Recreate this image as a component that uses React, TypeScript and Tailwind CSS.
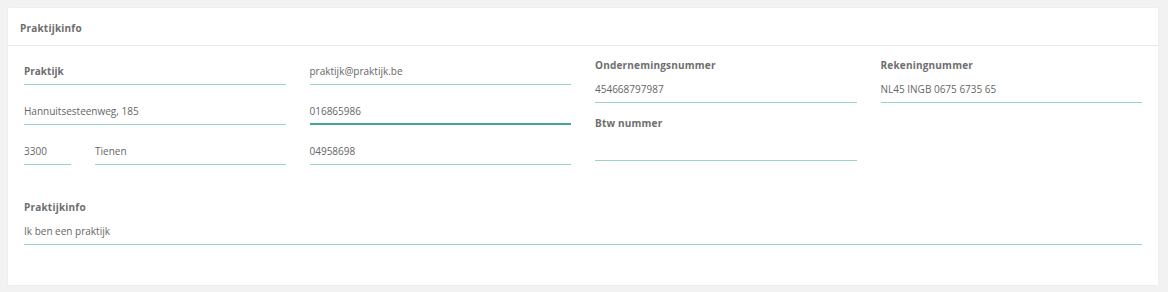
import React from "react";

const font = { fontFamily: '"Open Sans", "Liberation Sans", sans-serif' };

function Line({
  value,
  bold,
  focused,
  className = "",
}: {
  value?: string;
  bold?: boolean;
  focused?: boolean;
  className?: string;
}) {
  return (
    <div
      className={`pt-[6px] leading-[14px] text-[10px] ${
        focused ? "pb-[5px] border-b-2 border-[#3fa893]" : "pb-[6px] border-b border-[#98d5c6]"
      } ${bold ? "font-bold text-[#6e6e6e]" : "text-[#666]"} ${className}`}
    >
      <span className="block h-[14px]">{value}</span>
    </div>
  );
}

function LabeledField({ label, value }: { label: string; value?: string }) {
  return (
    <div>
      <div className="text-[10px] leading-[14px] font-bold text-[#6e6e6e] tracking-[0.2px]">{label}</div>
      <div className="mt-[10px] h-[14px] text-[10px] leading-[14px] text-[#666]">{value}</div>
      <div className="mt-[6px] border-b border-[#98d5c6]" />
    </div>
  );
}

export default function App() {
  return (
    <div className="min-h-[292px] bg-[#f2f2f2] pt-[8px] pl-[8px] pr-[10px] pb-[7px]" style={font}>
      <div className="bg-white shadow-[0_0_2px_rgba(0,0,0,0.05)]">
        {/* Header */}
        <div className="h-[38px] px-[12px] flex items-center border-b border-[#e8e8e8]">
          <h2 className="text-[10px] font-bold text-[#6e6e6e] tracking-[0.2px] mt-[3px]">Praktijkinfo</h2>
        </div>

        <div className="px-[16px] pt-[12px] pb-[40px]">
          <div className="grid grid-cols-4 gap-x-[24px]">
            {/* Col 1 */}
            <div className="flex flex-col gap-[13px]">
              <Line value="Praktijk" bold />
              <Line value="Hannuitsesteenweg, 185" />
              <div className="flex gap-[24px]">
                <Line value="3300" className="w-[47px]" />
                <Line value="Tienen" className="flex-1" />
              </div>
            </div>

            {/* Col 2 */}
            <div className="flex flex-col gap-[13px]">
              <Line value="praktijk@praktijk.be" />
              <Line value="016865986" focused />
              <Line value="04958698" />
            </div>

            {/* Col 3 */}
            <div className="flex flex-col gap-[13px]">
              <LabeledField label="Ondernemingsnummer" value="454668797987" />
              <LabeledField label="Btw nummer" />
            </div>

            {/* Col 4 */}
            <div>
              <LabeledField label="Rekeningnummer" value="NL45 INGB 0675 6735 65" />
            </div>
          </div>

          <div className="mt-[35px]">
            <LabeledField label="Praktijkinfo" value="Ik ben een praktijk" />
          </div>
        </div>
      </div>
    </div>
  );
}
